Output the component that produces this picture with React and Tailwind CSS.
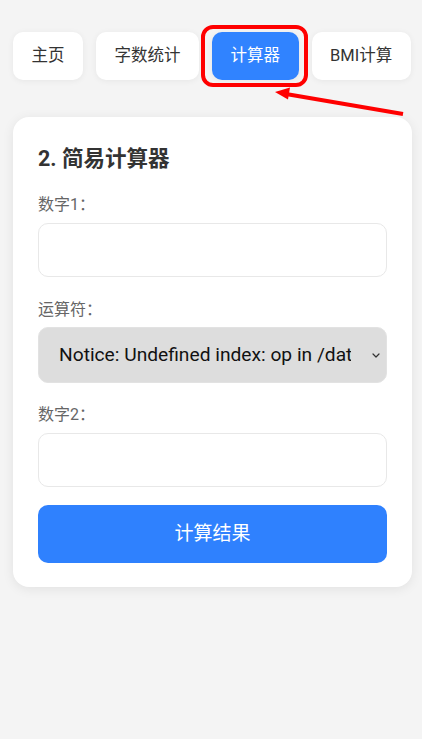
export default function App() {
  const font = { fontFamily: 'Roboto, "Noto Sans CJK SC", sans-serif' };
  return (
    <div className="relative min-h-[739px] w-[422px] bg-[#f4f4f4] text-[#333]" style={font}>
      <nav className="flex gap-[13px] pl-[13px] pt-[32px]">
        <button className="h-[48px] shrink-0 whitespace-nowrap rounded-[10px] bg-white px-[18.5px] text-[16.5px] text-[#333] shadow-[0_1px_6px_rgba(0,0,0,0.06)]">主页</button>
        <button className="h-[48px] shrink-0 whitespace-nowrap rounded-[10px] bg-white px-[18.5px] text-[16.5px] text-[#333] shadow-[0_1px_6px_rgba(0,0,0,0.06)]">字数统计</button>
        <button className="h-[48px] shrink-0 whitespace-nowrap rounded-[10px] bg-[#3083ff] px-[18.5px] text-[16.5px] text-white shadow-[0_1px_6px_rgba(0,0,0,0.06)]">计算器</button>
        <button className="h-[48px] shrink-0 whitespace-nowrap rounded-[10px] bg-white px-[18.5px] text-[16.5px] text-[#333] shadow-[0_1px_6px_rgba(0,0,0,0.06)]">BMI计算</button>
      </nav>

      <div className="mx-[13px] mt-[37px] w-[399px] rounded-[16px] bg-white px-[25px] pt-[28px] pb-[24px] shadow-[0_2px_12px_rgba(0,0,0,0.08)]">
        <h2 className="text-[21.5px] font-bold leading-[28px] text-[#333]">2. 简易计算器</h2>

        <div className="mt-[20px] text-[16px] leading-[24px] text-[#666]">数字1：</div>
        <div className="mt-[6px] h-[54px] rounded-[10px] border border-[#e8e8e8] bg-white"></div>

        <div className="mt-[21px] text-[16px] leading-[24px] text-[#666]">运算符：</div>
        <div className="mt-[5px] flex h-[56px] items-center rounded-[10px] border border-[#e2e2e2] bg-[#dddddd] pl-[20px] pr-[6px]">
          <div className="w-[292px] overflow-hidden whitespace-nowrap text-[19.2px] text-[#111]">Notice: Undefined index: op in /data/www/index.php</div>
          <svg className="ml-auto" width="8" height="5" viewBox="0 0 8 5" fill="none">
            <path d="M1 1l3 3 3-3" stroke="#333" strokeWidth="1.2" strokeLinecap="round" strokeLinejoin="round" />
          </svg>
        </div>

        <div className="mt-[20px] text-[16px] leading-[24px] text-[#666]">数字2：</div>
        <div className="mt-[6px] h-[54px] rounded-[10px] border border-[#e8e8e8] bg-white"></div>

        <button className="mt-[18px] flex h-[58px] w-full items-center justify-center rounded-[10px] bg-[#2f81fe] text-[19px] text-white">计算结果</button>
      </div>

      <div className="absolute left-[201px] top-[25px] h-[62px] w-[107px] rounded-[12px] border-[4px] border-[#ff0000]"></div>
      <svg className="absolute left-0 top-0" width="422" height="140" viewBox="0 0 422 140">
        <line x1="403" y1="114" x2="286" y2="94" stroke="#ff0000" strokeWidth="4" />
        <polygon points="275,92 290,87.5 288,99.5" fill="#ff0000" />
      </svg>
    </div>
  );
}
